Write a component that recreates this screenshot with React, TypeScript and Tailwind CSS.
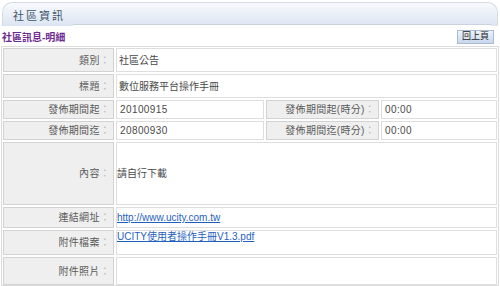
import React from "react";

const font = { fontFamily: '"Liberation Sans", Arial, "Noto Sans CJK TC", sans-serif' };

function Label({ text, className = "" }: { text: string; className?: string }) {
    return (
        <div className={`flex items-center justify-end pr-[3px] bg-[#efefef] border border-[#d2d2d2] text-[10px] text-[#5a5a5a] tracking-[0.3px] ${className}`}>
            <span>{text}</span>
            <span className="text-[#b5b5b5]">：</span>
        </div>
    );
}

function Value({ children, className = "" }: { children?: React.ReactNode; className?: string }) {
    return (
        <div className={`flex bg-white border border-[#dedede] text-[10px] text-[#4a4a4a] ${className}`}>
            {children}
        </div>
    );
}

export default function App() {
    return (
        <div className="w-[500px] h-[286px] bg-white overflow-hidden" style={font}>
            {/* header */}
            <div className="mx-[2px] mt-[2px] h-[24px] rounded-t-[10px] border border-b-0 border-[#d3dce6] bg-gradient-to-b from-[#f8fafd] to-[#dbe5f2] flex items-end">
                <div className="h-full w-[70px] flex items-center pl-[10px] pt-[3px]">
                    <span className="text-[11px] tracking-[2px] text-[#3d5468] whitespace-nowrap">社區資訊</span>
                </div>
                <div className="flex-1 h-[2px] border-t border-[#c9d3de] bg-white mr-[6px]" />
            </div>

            {/* breadcrumb + back */}
            <div className="flex items-center justify-between h-[20px] pl-[2px] pr-[6px]">
                <span className="text-[10px] font-bold text-[#6e2a92] pt-[3px]">社區訊息-明細</span>
                <button className="h-[14px] px-[4px] mt-[1px] border border-[#a9bbd3] bg-gradient-to-b from-[#eef3fa] to-[#c8d7ec] text-[9px] text-[#222] leading-none">
                    回上頁
                </button>
            </div>

            {/* detail table */}
            <div className="mx-[1px] border border-[#dcdcdc] p-[1px] h-[240px]">
                <div className="grid grid-cols-[111px_148px_113px_1fr] grid-rows-[24px_24px_19px_19px_63px_21px_25px_28px] gap-[2px] h-full">
                    <Label text="類別" />
                    <Value className="col-span-3 items-center pl-[2px]">社區公告</Value>

                    <Label text="標題" />
                    <Value className="col-span-3 items-center pl-[2px]">數位服務平台操作手冊</Value>

                    <Label text="發佈期間起" />
                    <Value className="items-center pl-[3px] tracking-[0.4px]">20100915</Value>
                    <Label text="發佈期間起(時分)" />
                    <Value className="items-center pl-[3px] tracking-[0.4px]">00:00</Value>

                    <Label text="發佈期間迄" />
                    <Value className="items-center pl-[3px] tracking-[0.4px]">20800930</Value>
                    <Label text="發佈期間迄(時分)" />
                    <Value className="items-center pl-[3px] tracking-[0.4px]">00:00</Value>

                    <Label text="內容" />
                    <Value className="col-span-3 items-center pl-0">請自行下載</Value>

                    <Label text="連結網址" />
                    <Value className="col-span-3 items-center pl-0">
                        <a href="#" className="text-[10px] text-[#1f5fbf] underline">http://www.ucity.com.tw</a>
                    </Value>

                    <Label text="附件檔案" />
                    <Value className="col-span-3 items-start pl-0">
                        <a href="#" className="text-[10px] text-[#1f5fbf] underline leading-[12px]">UCITY使用者操作手冊V1.3.pdf</a>
                    </Value>

                    <Label text="附件照片" />
                    <Value className="col-span-3" />
                </div>
            </div>
        </div>
    );
}
